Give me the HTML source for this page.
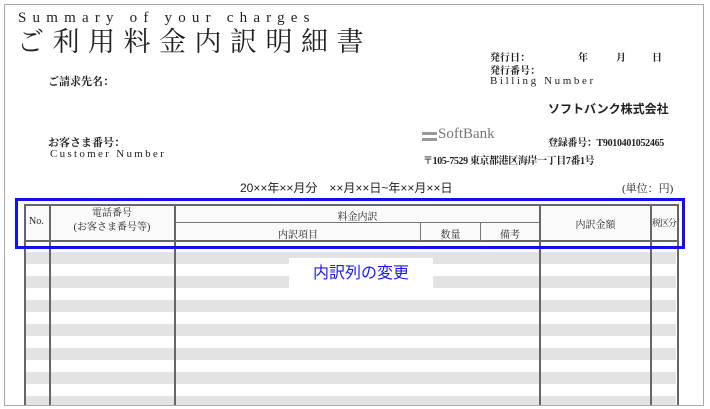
<!DOCTYPE html>
<html><head><meta charset="utf-8"><style>
*{margin:0;padding:0;box-sizing:border-box}
body{width:710px;height:409px;background:#fff;position:relative;overflow:hidden;font-family:"Liberation Serif","Noto Serif CJK SC",serif;color:#222}
.a{position:absolute;white-space:nowrap}
.s{font-family:"Liberation Sans","Noto Sans CJK JP",sans-serif}
.v{position:absolute;top:204px;height:201px;width:2px;background:#666}
.st{position:absolute;left:26px;width:650px;height:12px;background:#e3e3e3}
</style></head><body>
<div class="st" style="top:252px"></div><div class="st" style="top:276px"></div><div class="st" style="top:300px"></div><div class="st" style="top:324px"></div><div class="st" style="top:348px"></div><div class="st" style="top:372px"></div><div class="st" style="top:396px;height:9px"></div>
<div class="a" style="left:4px;top:4px;width:700px;height:402px;border:1px solid #aaa"></div>
<div class="a" style="left:18px;top:10px;font-size:15px;letter-spacing:6.2px">Summary of your charges</div>
<div class="a" style="left:17px;top:26px;font-size:27px;letter-spacing:8.5px;line-height:32px">ご利用料金内訳明細書</div>
<div class="a" style="left:48px;top:73px;font-size:11px;font-weight:bold">ご請求先名：</div>
<div class="a" style="left:48px;top:134px;font-size:11px;font-weight:bold">お客さま番号：</div>
<div class="a" style="left:50px;top:148px;font-size:11px;letter-spacing:2.3px">Customer Number</div>
<div class="a" style="left:490px;top:49px;font-size:10px;font-weight:bold">発行日：</div>
<div class="a" style="left:578px;top:49px;font-size:10px;font-weight:bold">年</div>
<div class="a" style="left:616px;top:49px;font-size:10px;font-weight:bold">月</div>
<div class="a" style="left:652px;top:49px;font-size:10px;font-weight:bold">日</div>
<div class="a" style="left:490px;top:62px;font-size:10px;font-weight:bold">発行番号：</div>
<div class="a" style="left:490px;top:75px;font-size:11px;letter-spacing:2.6px">Billing Number</div>
<div class="a s" style="left:548px;top:100px;font-size:12px;font-weight:bold">ソフトバンク株式会社</div>
<div class="a" style="left:422px;top:132px;width:15px;height:3px;background:#999"></div>
<div class="a" style="left:422px;top:138px;width:15px;height:3px;background:#999"></div>
<div class="a" style="left:438px;top:126px;font-size:15px;color:#777">SoftBank</div>
<div class="a" style="left:548px;top:134px;font-size:10px;font-weight:bold;letter-spacing:-0.3px">登録番号：T9010401052465</div>
<div class="a" style="left:423px;top:152px;font-size:10px;font-weight:bold;letter-spacing:-0.4px">〒105-7529 東京都港区海岸一丁目7番1号</div>
<div class="a s" style="left:240px;top:179px;font-size:12px">20××年××月分　××月××日~年××月××日</div>
<div class="a" style="left:622px;top:180px;font-size:11px">(単位：円)</div>
<div class="a" style="left:24px;top:204px;width:655px;height:38px;border:2px solid #666;background:#fafafa"></div>
<div class="a" style="left:174px;top:222px;width:366px;height:1px;background:#777"></div>
<div class="a" style="left:420px;top:222px;width:1px;height:19px;background:#777"></div>
<div class="a" style="left:480px;top:222px;width:1px;height:19px;background:#777"></div>
<div class="v" style="left:24px"></div><div class="v" style="left:49px"></div><div class="v" style="left:174px"></div><div class="v" style="left:539px"></div><div class="v" style="left:650px"></div><div class="v" style="left:677px"></div>
<div class="a" style="left:29px;top:216px;font-size:10px">No.</div>
<div class="a" style="left:50px;top:207px;width:124px;text-align:center;font-size:10px;line-height:14px">電話番号<br>(お客さま番号等)</div>
<div class="a" style="left:176px;top:208px;width:363px;text-align:center;font-size:10px">料金内訳</div>
<div class="a" style="left:176px;top:226px;width:244px;text-align:center;font-size:10px">内訳項目</div>
<div class="a" style="left:421px;top:226px;width:59px;text-align:center;font-size:10px">数量</div>
<div class="a" style="left:481px;top:226px;width:58px;text-align:center;font-size:10px">備考</div>
<div class="a" style="left:541px;top:216px;width:109px;text-align:center;font-size:10px">内訳金額</div>
<div class="a" style="left:652px;top:216px;font-size:9px;letter-spacing:-1px">税区分</div>
<div class="a" style="left:15px;top:198px;width:670px;height:51px;border:3px solid #1010f0"></div>
<div class="a s" style="left:289px;top:258px;width:144px;height:31px;background:#fff;color:#1a1aff;font-size:16px;text-align:center;line-height:31px">内訳列の変更</div>
</body></html>
